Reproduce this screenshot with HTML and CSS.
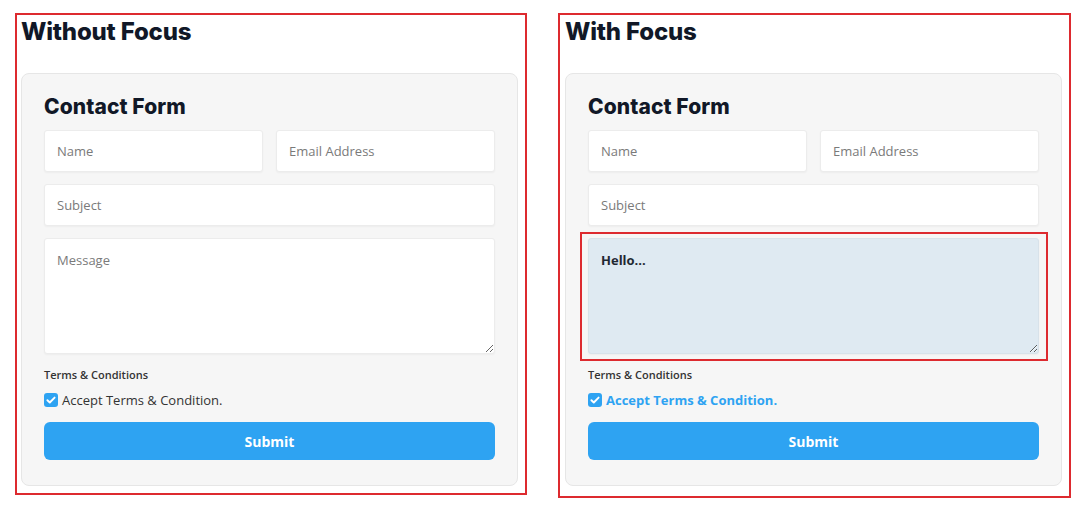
FILE: index.html
```html
<!DOCTYPE html>
<html lang="en">
<head>
<meta charset="utf-8">
<title>Contact form focus states</title>
<link rel="stylesheet" href="styles.css">
</head>
<body>
<div class="page">
  <section class="demo demo-left">
    <h1 class="demo-title">Without Focus</h1>
    <form class="card">
      <h2 class="card-title">Contact Form</h2>
      <div class="row two">
        <input class="field" type="text" placeholder="Name">
        <input class="field" type="text" placeholder="Email Address">
      </div>
      <div class="row">
        <input class="field" type="text" placeholder="Subject">
      </div>
      <div class="row">
        <textarea class="field area" placeholder="Message"></textarea>
      </div>
      <div class="terms-label">Terms &amp; Conditions</div>
      <label class="check">
        <span class="box"><svg width="14" height="14" viewBox="0 0 14 14"><path d="M3.4 7.2 L5.8 9.5 L10.6 4.6" fill="none" stroke="#fff" stroke-width="1.9" stroke-linecap="round" stroke-linejoin="round"/></svg></span>
        <span>Accept Terms &amp; Condition.</span>
      </label>
      <button type="button" class="submit">Submit</button>
    </form>
  </section>
  <section class="demo demo-right">
    <h1 class="demo-title">With Focus</h1>
    <form class="card">
      <h2 class="card-title">Contact Form</h2>
      <div class="row two">
        <input class="field" type="text" placeholder="Name">
        <input class="field" type="text" placeholder="Email Address">
      </div>
      <div class="row">
        <input class="field" type="text" placeholder="Subject">
      </div>
      <div class="row highlight">
        <textarea class="field area focused">Hello...</textarea>
      </div>
      <div class="terms-label">Terms &amp; Conditions</div>
      <label class="check checked-focus">
        <span class="box"><svg width="14" height="14" viewBox="0 0 14 14"><path d="M3.4 7.2 L5.8 9.5 L10.6 4.6" fill="none" stroke="#fff" stroke-width="1.9" stroke-linecap="round" stroke-linejoin="round"/></svg></span>
        <span>Accept Terms &amp; Condition.</span>
      </label>
      <button type="button" class="submit">Submit</button>
    </form>
  </section>
</div>
</body>
</html>
```

FILE: styles.css
```css
* { box-sizing: border-box; }

html, body {
  margin: 0;
  padding: 0;
  background: #ffffff;
}

body {
  font-family: "Open Sans", "Liberation Sans", sans-serif;
  color: #333;
}

.page {
  display: flex;
  align-items: flex-start;
  gap: 31px;
  padding: 13px 0 0 15px;
}

.demo {
  width: 512px;
  border: 2px solid #dd2a2f;
  padding: 3px 7px 7px 4px;
}

.demo-right {
  width: 513px;
  padding-left: 5px;
  padding-bottom: 10px;
}

.demo-title {
  margin: 0;
  font-family: "Inter", "Liberation Sans", sans-serif;
  font-weight: 800;
  font-size: 24px;
  line-height: 28px;
  letter-spacing: -0.2px;
  color: #111827;
}

.card {
  margin-top: 27px;
  background: #f6f6f6;
  border: 1px solid #e6e6e6;
  border-radius: 8px;
  padding: 20px 22px 25px 22px;
  display: flex;
  flex-direction: column;
}

.card-title {
  margin: 0 0 10px 0;
  font-family: "Inter", "Liberation Sans", sans-serif;
  font-weight: 800;
  font-size: 21px;
  line-height: 26px;
  letter-spacing: 0.1px;
  color: #111827;
}

.row {
  display: flex;
  gap: 13px;
  margin-bottom: 12px;
}

.row.two .field { flex: 1 1 0; }

.field {
  width: 100%;
  height: 42px;
  border: 1px solid #ececec;
  border-radius: 3px;
  background: #ffffff;
  padding: 0 12px;
  font-family: "Open Sans", "Liberation Sans", sans-serif;
  font-size: 13px;
  color: #222;
  box-shadow: 0 1px 2px rgba(0,0,0,0.04);
  outline: none;
}

.field::placeholder { color: #7a7a7a; }

.area {
  height: 116px;
  padding: 12px 12px;
  resize: vertical;
  line-height: 18px;
  display: block;
}

.highlight {
  border: 2px solid #dd2a2f;
  margin: -6px -9px 5px -8px;
  padding: 4px 7px 5px 6px;
}

.focused {
  background: #dfeaf2;
  border-color: #d8e2ea;
  font-weight: 700;
  color: #1f2933;
}

.terms-label {
  font-size: 11px;
  font-weight: 600;
  color: #333;
  line-height: 16px;
  margin-top: 1px;
}

.check {
  display: flex;
  align-items: center;
  gap: 4px;
  margin-top: 8px;
  font-size: 13px;
  color: #333;
  line-height: 18px;
}

.box {
  width: 14px;
  height: 14px;
  border-radius: 3px;
  background: #2ea3f2;
  display: flex;
  flex: none;
}

.checked-focus span {
  color: #2ea3f2;
  font-weight: 700;
}

.submit {
  margin-top: 13px;
  height: 38px;
  border: none;
  border-radius: 6px;
  background: #2ea3f2;
  color: #ffffff;
  font-family: "Open Sans", "Liberation Sans", sans-serif;
  font-weight: 700;
  font-size: 14px;
}
```
